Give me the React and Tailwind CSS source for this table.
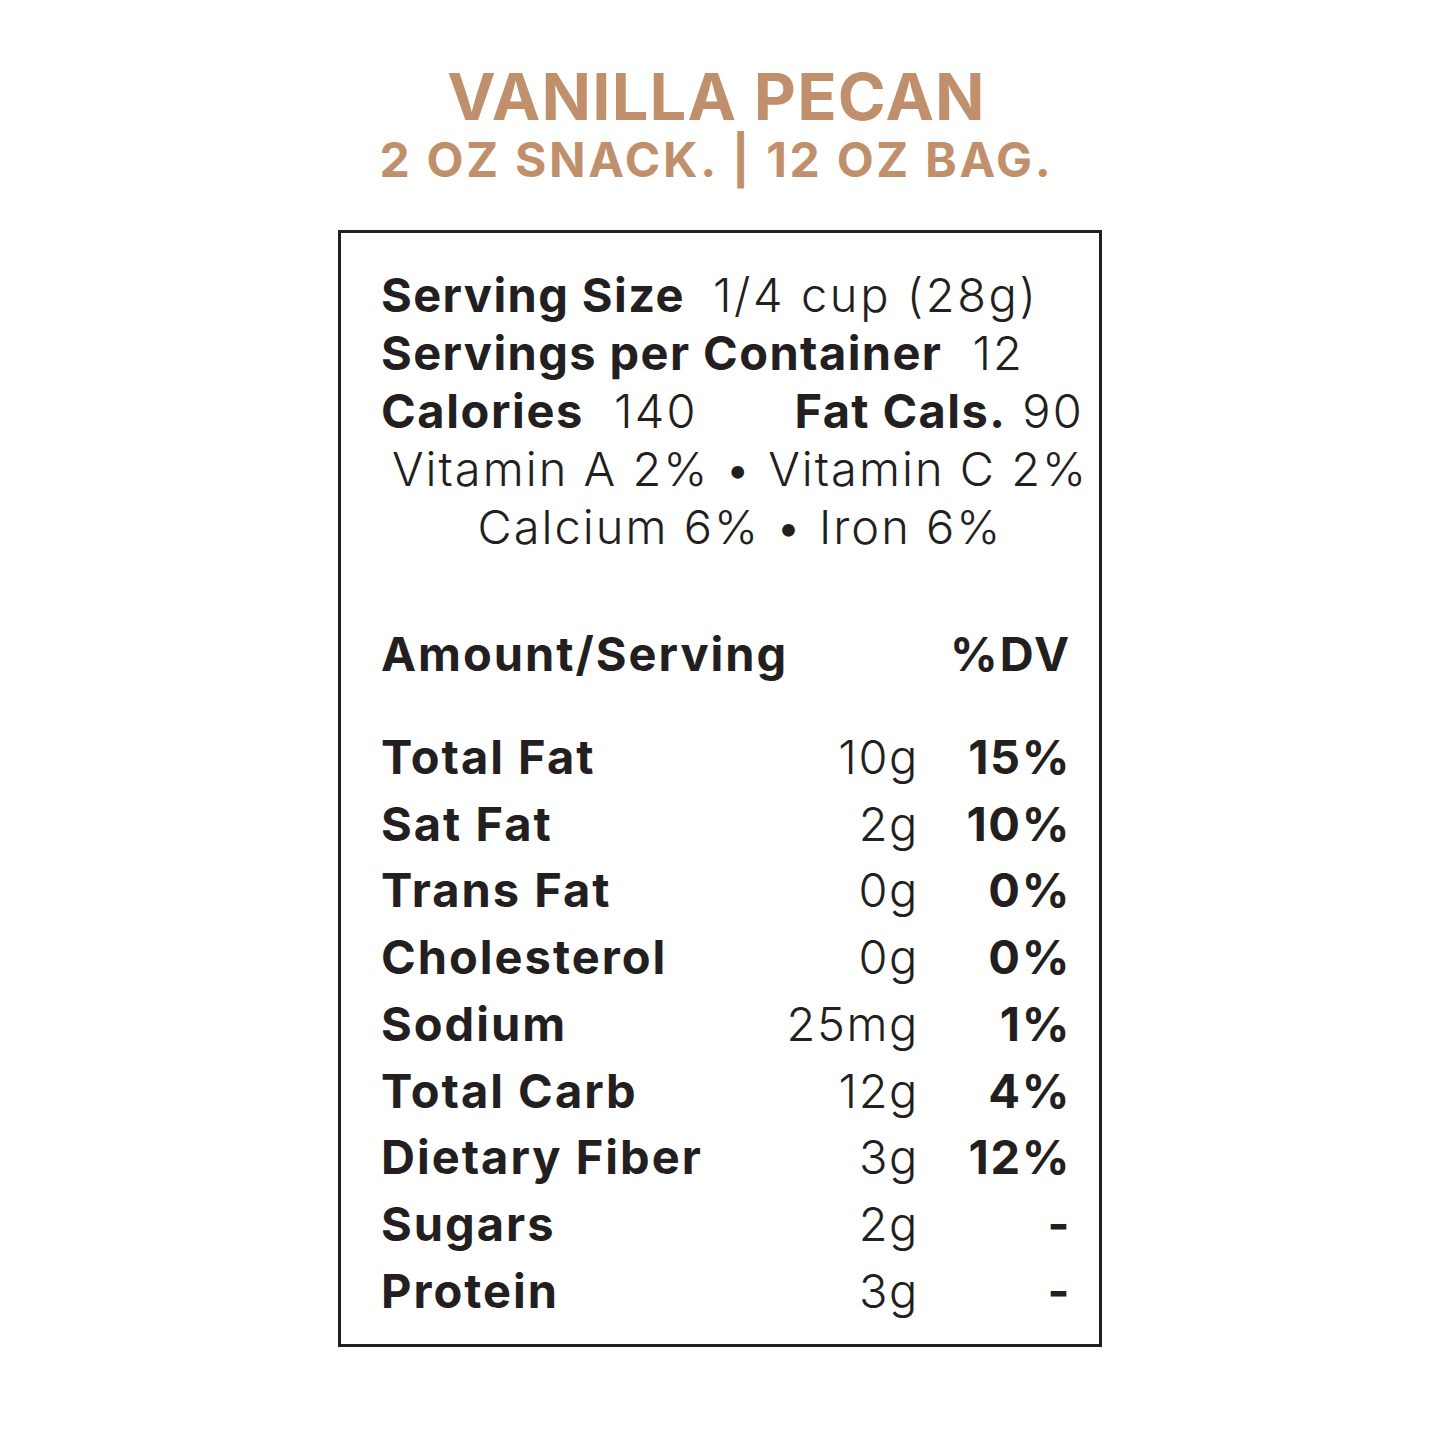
import React from 'react';

const nutrients = [
    { name: 'Total Fat', amount: '10g', dv: '15%' },
    { name: 'Sat Fat', amount: '2g', dv: '10%' },
    { name: 'Trans Fat', amount: '0g', dv: '0%' },
    { name: 'Cholesterol', amount: '0g', dv: '0%' },
    { name: 'Sodium', amount: '25mg', dv: '1%' },
    { name: 'Total Carb', amount: '12g', dv: '4%' },
    { name: 'Dietary Fiber', amount: '3g', dv: '12%' },
    { name: 'Sugars', amount: '2g', dv: '-' },
    { name: 'Protein', amount: '3g', dv: '-' },
];

export default function App() {
    return (
        <div className="min-h-screen bg-white font-['Inter',sans-serif] text-[#231f20]">
            <div className="flex flex-col items-center">
                <h1 className="mt-[64px] mr-[12px] text-[65px] font-bold leading-[65px] tracking-[1.2px] text-[#c0906c]">
                    VANILLA PECAN
                </h1>
                <h2 className="mt-[7px] mr-[12px] text-[48px] font-bold leading-[48px] tracking-[2.7px] text-[#c0906c]">
                    2 OZ SNACK. | 12 OZ BAG.
                </h2>

                {/* label box */}
                <div className="mt-[46px] mr-[5px] w-[764px] border-[3px] border-[#231f20] pl-[40px] pr-[15px] pt-[33px] pb-[20px] text-[47px] leading-[58px]">
                    <div className="flex">
                        <span className="font-bold tracking-[1.4px]">Serving Size</span>
                        <span className="ml-[28px] font-light tracking-[2.6px]">1/4 cup (28g)</span>
                    </div>
                    <div className="flex">
                        <span className="font-bold tracking-[1.4px]">Servings per Container</span>
                        <span className="ml-[30px] font-light tracking-[2.2px]">12</span>
                    </div>
                    <div className="flex justify-between">
                        <div className="flex">
                            <span className="font-bold tracking-[1.6px]">Calories</span>
                            <span className="ml-[30px] font-light tracking-[2.2px]">140</span>
                        </div>
                        <div className="flex">
                            <span className="font-bold tracking-[1.4px]">Fat Cals.</span>
                            <span className="ml-[16px] font-light tracking-[2.2px]">90</span>
                        </div>
                    </div>
                    <div className="-mr-[15px] flex justify-center whitespace-nowrap font-light tracking-[2px]">
                        Vitamin A 2% • Vitamin C 2%
                    </div>
                    <div className="-mr-[15px] flex justify-center whitespace-nowrap font-light tracking-[2px]">
                        Calcium 6% • Iron 6%
                    </div>

                    <div className="mt-[69px] flex justify-between pr-[13px] font-bold tracking-[2px]">
                        <span>Amount/Serving</span>
                        <span>%DV</span>
                    </div>

                    <div className="mt-[41px] pr-[13px]">
                        {nutrients.map((n) => (
                            <div key={n.name} className="flex leading-[66.7px]">
                                <span className="flex-1 font-bold tracking-[2px]">{n.name}</span>
                                <span className="w-[200px] text-right font-light tracking-[1.6px]">{n.amount}</span>
                                <span className="w-[152px] text-right font-bold tracking-[1.6px]">{n.dv}</span>
                            </div>
                        ))}
                    </div>
                </div>
            </div>
        </div>
    );
}
